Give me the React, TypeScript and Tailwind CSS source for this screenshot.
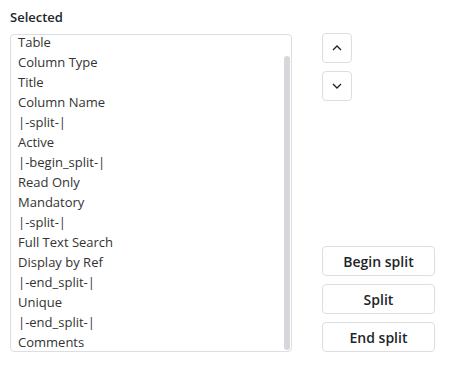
import React from "react";

const items = [
  "Table",
  "Column Type",
  "Title",
  "Column Name",
  "|-split-|",
  "Active",
  "|-begin_split-|",
  "Read Only",
  "Mandatory",
  "|-split-|",
  "Full Text Search",
  "Display by Ref",
  "|-end_split-|",
  "Unique",
  "|-end_split-|",
  "Comments",
];

export default function App() {
  return (
    <div
      className="w-[450px] h-[368px] bg-white pl-[10px] pt-[7px] text-[#212529]"
      style={{ fontFamily: '"Open Sans", "Noto Sans", sans-serif' }}
    >
      <div className="text-[13px] leading-[20px] font-semibold h-[27px]">Selected</div>
      <div className="flex items-start gap-[30px]">
        <div className="relative w-[282px] h-[318px] border border-[#dcdee2] rounded-[4px] overflow-hidden shrink-0">
          <div className="mt-[-3px] pl-[7px]">
            {items.map((t, i) => (
              <div key={i} className="text-[13px] leading-[20px] h-[20px] text-[#333]">
                {t}
              </div>
            ))}
          </div>
          <div className="absolute left-[273px] top-[21px] w-[6px] h-[294px] rounded-full bg-[#d6d7db]" />
        </div>
        <div className="flex flex-col justify-between h-[319px] -mt-[1px]">
          <div className="flex flex-col gap-[8px]">
            <button className="w-[30px] h-[30px] border border-[#dcdee2] rounded-[4px] flex items-center justify-center bg-white">
              <svg width="10" height="6" viewBox="0 0 10 6">
                <polyline points="1,5 5,1 9,5" fill="none" stroke="#222" strokeWidth="1.3" />
              </svg>
            </button>
            <button className="w-[30px] h-[30px] border border-[#dcdee2] rounded-[4px] flex items-center justify-center bg-white">
              <svg width="10" height="6" viewBox="0 0 10 6">
                <polyline points="1,1 5,5 9,1" fill="none" stroke="#222" strokeWidth="1.3" />
              </svg>
            </button>
          </div>
          <div className="flex flex-col gap-[8px]">
            {["Begin split", "Split", "End split"].map((b) => (
              <button
                key={b}
                className="w-[113px] h-[30px] border border-[#dcdee2] rounded-[4px] bg-white text-[14px] font-semibold text-[#212529] flex items-center justify-center"
              >
                {b}
              </button>
            ))}
          </div>
        </div>
      </div>
    </div>
  );
}
